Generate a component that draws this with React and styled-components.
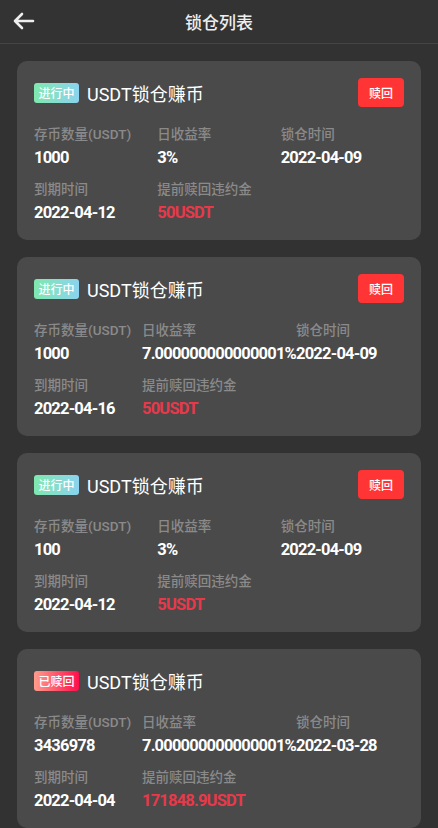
import React from 'react';
import styled, { createGlobalStyle } from 'styled-components';

const GlobalStyle = createGlobalStyle`
    * { box-sizing: border-box; }
    body {
        margin: 0;
        background: #323232;
        font-family: Roboto, "Noto Sans CJK SC", sans-serif;
        color: #fff;
    }
`;

const records = [
    { status: 'active', amount: '1000', rate: '3%', lockDate: '2022-04-09', endDate: '2022-04-12', penalty: '50USDT' },
    { status: 'active', amount: '1000', rate: '7.000000000000001%', lockDate: '2022-04-09', endDate: '2022-04-16', penalty: '50USDT' },
    { status: 'active', amount: '100', rate: '3%', lockDate: '2022-04-09', endDate: '2022-04-12', penalty: '5USDT' },
    { status: 'redeemed', amount: '3436978', rate: '7.000000000000001%', lockDate: '2022-03-28', endDate: '2022-04-04', penalty: '171848.9USDT' },
];

function LockList() {
    return (
        <Page>
            <GlobalStyle />
            <Header>
                <BackButton aria-label="back">
                    <svg width="22" height="18" viewBox="0 0 22 18" fill="none">
                        <path d="M2 9H20M2 9L9 2M2 9L9 16" stroke="#eee" strokeWidth="2.6" strokeLinecap="round" strokeLinejoin="round" />
                    </svg>
                </BackButton>
                <Title>锁仓列表</Title>
            </Header>
            <List>
                {records.map((r, i) => (
                    <Card key={i}>
                        <CardTop>
                            <Badge $status={r.status}>{r.status === 'active' ? '进行中' : '已赎回'}</Badge>
                            <CardTitle>USDT锁仓赚币</CardTitle>
                            {r.status === 'active' && <RedeemButton>赎回</RedeemButton>}
                        </CardTop>
                        <Details>
                            <Column>
                                <Label>存币数量(USDT)</Label>
                                <Value>{r.amount}</Value>
                                <Label>到期时间</Label>
                                <Value>{r.endDate}</Value>
                            </Column>
                            <Column>
                                <Label>日收益率</Label>
                                <Value>{r.rate}</Value>
                                <Label>提前赎回违约金</Label>
                                <Value $red>{r.penalty}</Value>
                            </Column>
                            <Column>
                                <Label>锁仓时间</Label>
                                <Value>{r.lockDate}</Value>
                            </Column>
                        </Details>
                    </Card>
                ))}
            </List>
        </Page>
    );
}

const Page = styled.div`
    min-height: 100vh;
    background: #323232;
`;

const Header = styled.header`
    position: relative;
    height: 44px;
    display: flex;
    align-items: center;
    justify-content: center;
    background: #333;
    border-bottom: 1px solid #444;
`;

const BackButton = styled.button`
    position: absolute;
    left: 13px;
    top: 12px;
    padding: 0;
    border: none;
    background: none;
    display: flex;
`;

const Title = styled.h1`
    margin: 0;
    font-size: 17px;
    font-weight: 500;
    color: #eee;
`;

const List = styled.div`
    display: flex;
    flex-direction: column;
    gap: 17px;
    padding: 17px 17px 17px;
`;

const Card = styled.div`
    background: #4a4a4a;
    border-radius: 10px;
    padding: 17px 17px 14px;
`;

const CardTop = styled.div`
    display: flex;
    align-items: center;
    height: 29px;
`;

const Badge = styled.span`
    width: 45px;
    height: 20px;
    border-radius: 3px;
    display: flex;
    align-items: center;
    justify-content: center;
    font-size: 12px;
    font-weight: 500;
    color: #fff;
    background: ${p => p.$status === 'active'
        ? 'linear-gradient(90deg, #7fe8ae, #8bd3ef)'
        : 'linear-gradient(90deg, #ff9c8c, #ff0f4c)'};
`;

const CardTitle = styled.div`
    margin-left: 8px;
    font-size: 18px;
    color: #fff;
    flex: 1;
`;

const RedeemButton = styled.button`
    width: 46px;
    height: 29px;
    border: none;
    border-radius: 4px;
    background: #ff3535;
    color: #fff;
    font-size: 12px;
    font-weight: 500;
    font-family: inherit;
    padding: 0;
`;

const Details = styled.div`
    display: flex;
    margin-top: 16px;
`;

const Column = styled.div`
    flex: 1 1 0;
    display: flex;
    flex-direction: column;
`;

const Label = styled.div`
    font-size: 13.5px;
    line-height: 22px;
    font-weight: 500;
    color: #8a8a8a;
    white-space: nowrap;

    &:nth-child(3) {
        margin-top: 7px;
    }
`;

const Value = styled.div`
    font-size: 16.5px;
    line-height: 26px;
    font-weight: 700;
    letter-spacing: -0.8px;
    white-space: nowrap;
    color: ${p => (p.$red ? '#e8394b' : '#fff')};
`;

export default LockList;
